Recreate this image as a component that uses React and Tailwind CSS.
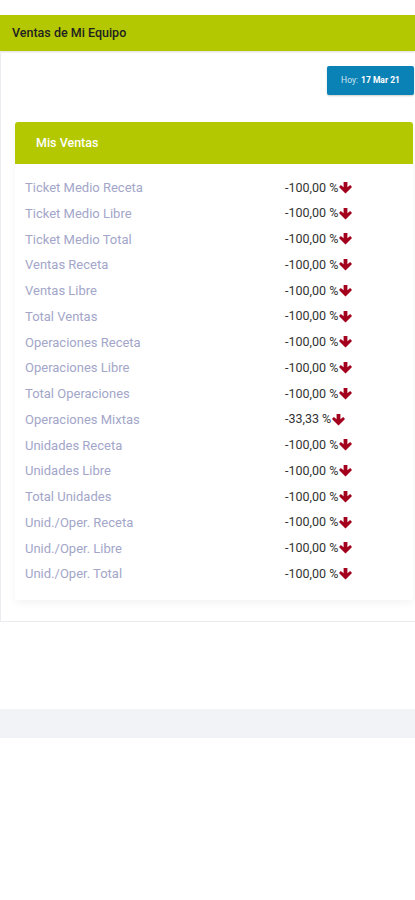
import React from "react";

const rows = [
  ["Ticket Medio Receta", "-100,00 %"],
  ["Ticket Medio Libre", "-100,00 %"],
  ["Ticket Medio Total", "-100,00 %"],
  ["Ventas Receta", "-100,00 %"],
  ["Ventas Libre", "-100,00 %"],
  ["Total Ventas", "-100,00 %"],
  ["Operaciones Receta", "-100,00 %"],
  ["Operaciones Libre", "-100,00 %"],
  ["Total Operaciones", "-100,00 %"],
  ["Operaciones Mixtas", "-33,33 %"],
  ["Unidades Receta", "-100,00 %"],
  ["Unidades Libre", "-100,00 %"],
  ["Total Unidades", "-100,00 %"],
  ["Unid./Oper. Receta", "-100,00 %"],
  ["Unid./Oper. Libre", "-100,00 %"],
  ["Unid./Oper. Total", "-100,00 %"],
];

function DownArrow() {
  return (
    <svg width="13" height="12" viewBox="0 0 13 12" className="ml-[1px]">
      <path d="M4.6 0 H8.4 V5.2 L11.2 3 L13 4.9 L6.5 11.6 L0 4.9 L1.8 3 L4.6 5.2 Z" fill="#a3001d" />
    </svg>
  );
}

export default function App() {
  return (
    <div className="w-[415px] min-h-[900px] bg-white pt-[15px]" style={{ fontFamily: "Roboto, 'Noto Sans', sans-serif" }}>
      <div className="h-[36px] bg-[#b3c800] flex items-center pl-[12px] text-[12.5px] font-medium text-[#222] shadow-[0_1px_2px_rgba(0,0,0,0.15)]">
        Ventas de Mi Equipo
      </div>
      <div className="border-l border-b border-[#ececf0] h-[571px] pt-[15px]">
        <div className="flex justify-end pr-[1px]">
          <div className="w-[87px] h-[29px] bg-[#0b82b6] rounded-[2px] flex items-center justify-center text-[8.5px] text-white shadow-[0_1px_2px_rgba(0,0,0,0.2)]">
            <span className="text-[#cfe6f2]">Hoy:</span>
            <span className="font-bold ml-[3px]">17 Mar 21</span>
          </div>
        </div>
        <div className="mt-[27px] ml-[14px] mr-[2px] bg-white rounded-[3px] shadow-[0_3px_8px_rgba(0,0,0,0.05)]">
          <div className="h-[42px] bg-[#b3c800] rounded-t-[3px] flex items-center pl-[21px] text-[12.5px] font-medium text-white">
            Mis Ventas
          </div>
          <div className="pt-[11px] pb-[13px]">
            {rows.map(([label, value]) => (
              <div key={label} className="flex items-center h-[25.75px] pl-[10px]">
                <div className="w-[260px] text-[13px] text-[#a3a6c9]">{label}</div>
                <div className="flex items-center text-[12.5px] text-[#333]">
                  <span>{value}</span>
                  <DownArrow />
                </div>
              </div>
            ))}
          </div>
        </div>
      </div>
      <div className="mt-[87px] h-[29px] bg-[#f2f3f7]" />
    </div>
  );
}
